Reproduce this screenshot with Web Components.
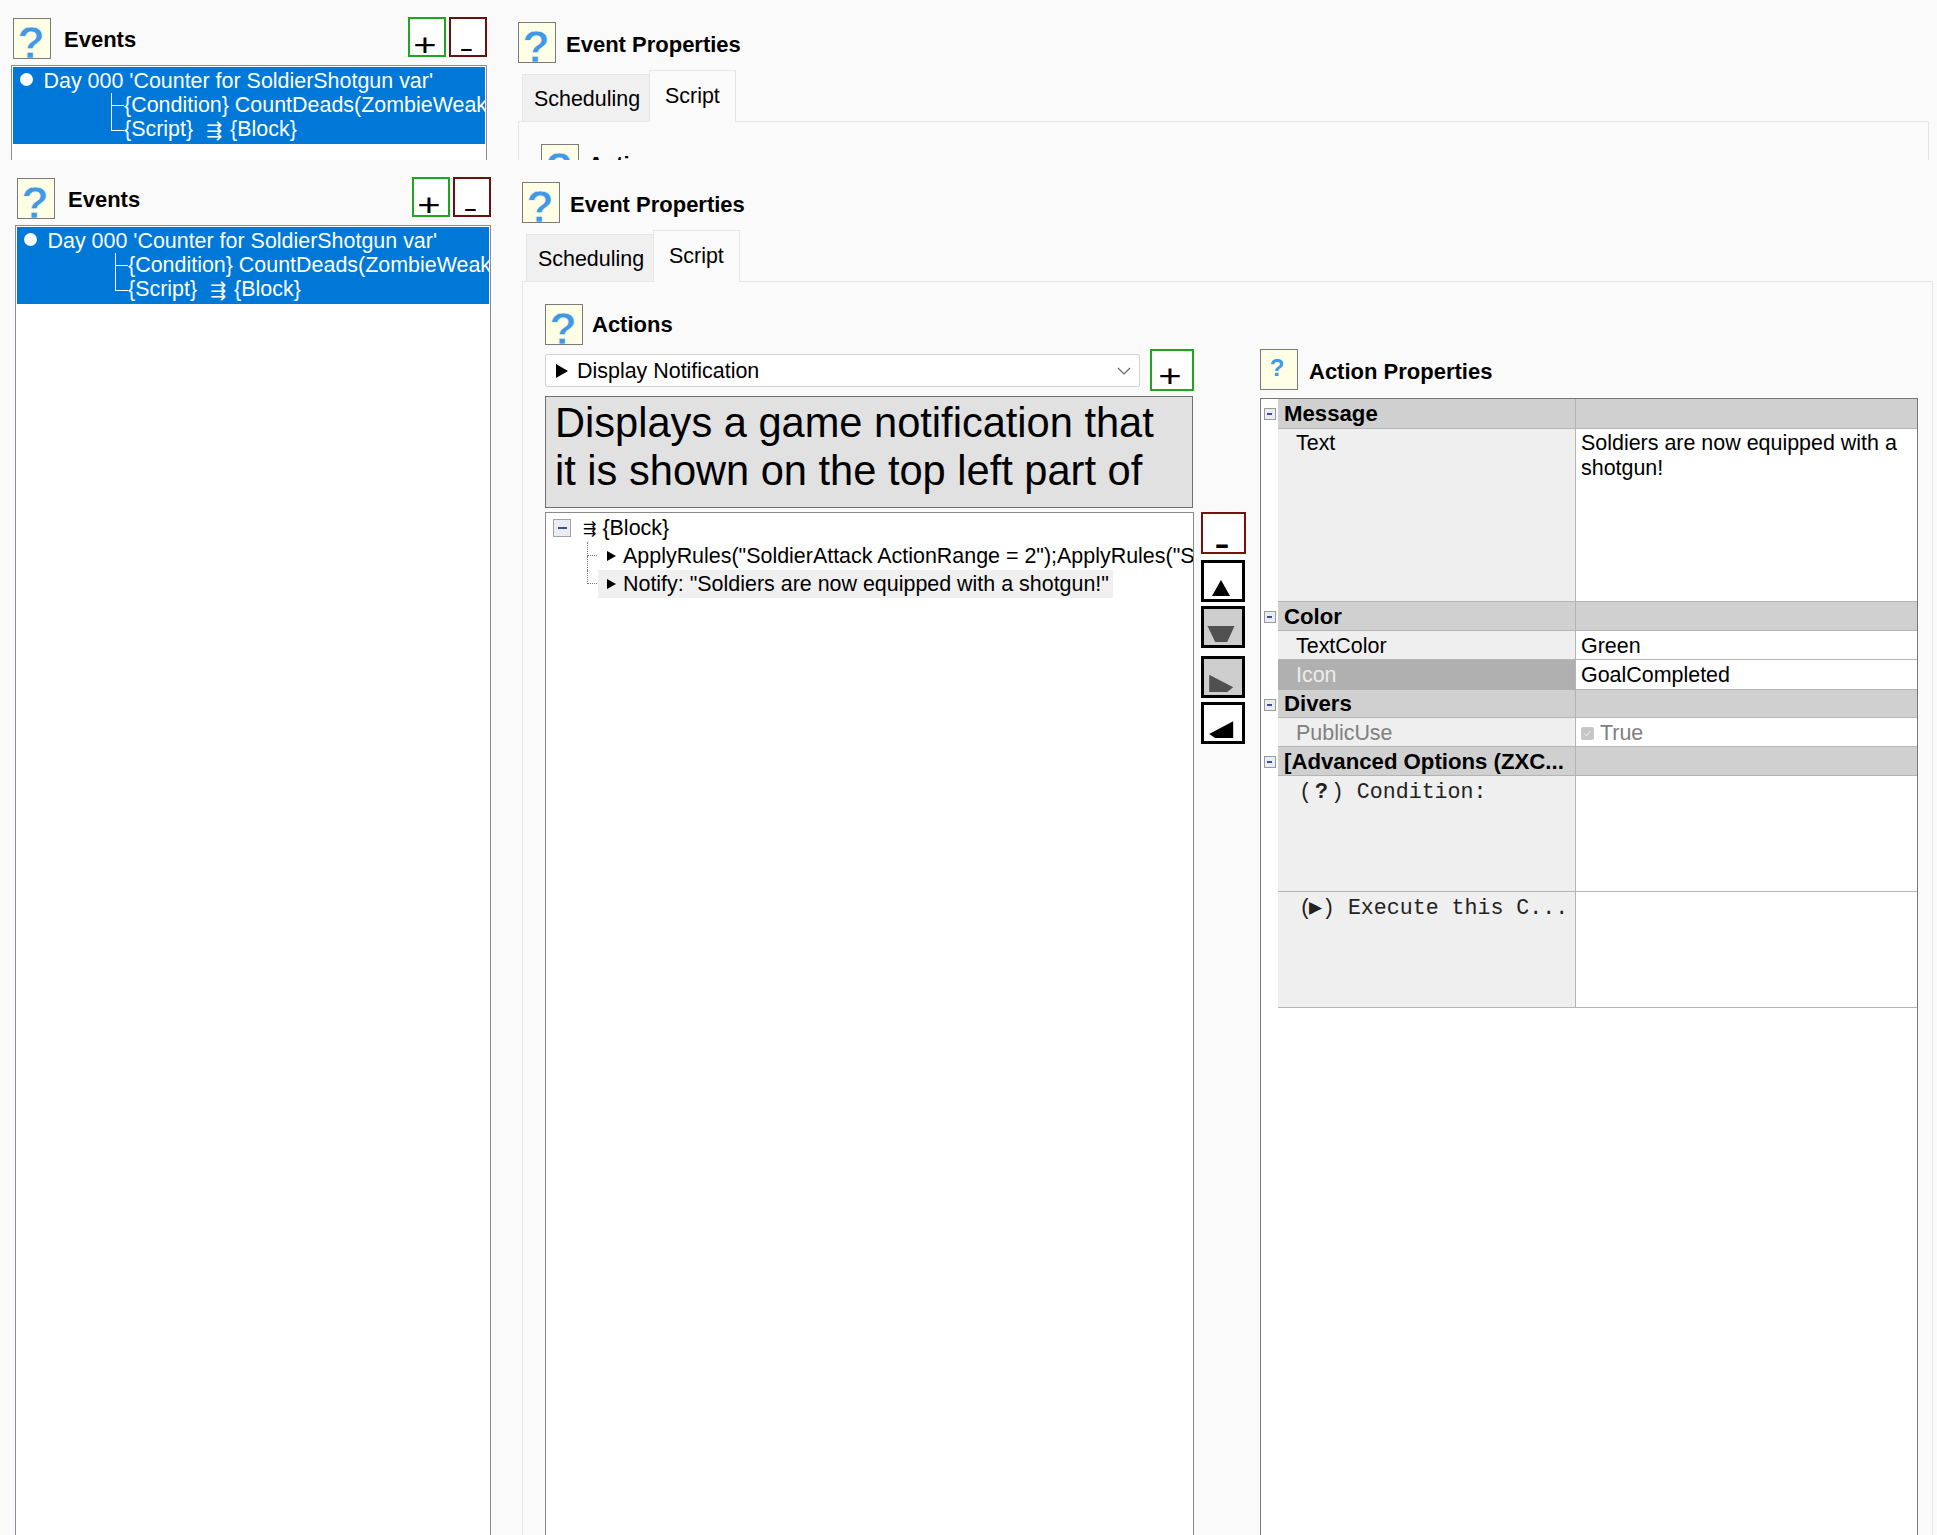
<!DOCTYPE html>
<html>
<head>
<meta charset="utf-8">
<title>Events</title>
<style>
  html, body { margin: 0; height: 100%; overflow: hidden; background: #fafafa; }
  body { font: 21.45px "Liberation Sans", Arial, sans-serif; color: #000; }
  prop-row .q { margin: 0 3px; }
  prop-row .r { font-style: normal; margin-left: -3px; }
</style>
</head>
<body>

<app-screen shift="0" style="height:160px">
  <events-pane>
    <event-list></event-list>
  </events-pane>
  <properties-pane>
    <section-title>Actions</section-title>
  </properties-pane>
</app-screen>

<app-screen shift="4" style="height:1375px">
  <events-pane>
    <event-list></event-list>
  </events-pane>
  <properties-pane>
    <div style="display:flex;gap:14px;height:100%">
      <action-editor>
        <tree-row kind="block"></tree-row>
        <tree-row text='ApplyRules("SoldierAttack ActionRange = 2");ApplyRules("S'></tree-row>
        <tree-row last active text='Notify: "Soldiers are now equipped with a shotgun!"'></tree-row>
      </action-editor>
      <action-props>
        <prop-row header name="Message" h="30"></prop-row>
        <prop-row tall name="Text" h="173" value="Soldiers are now equipped with a shotgun!"></prop-row>
        <prop-row header name="Color" h="29"></prop-row>
        <prop-row name="TextColor" h="29" value="Green"></prop-row>
        <prop-row selected name="Icon" h="30" value="GoalCompleted"></prop-row>
        <prop-row header name="Divers" h="28" style="--pad:1px"></prop-row>
        <prop-row readonly name="PublicUse" h="29" value="True"></prop-row>
        <prop-row header name="[Advanced Options (ZXC..." h="29"></prop-row>
        <prop-row code h="116"><span>(<b class="q">?</b>) Condition:</span></prop-row>
        <prop-row code h="116"><span>(<i class="r">&#9654;</i>) Execute this C...</span></prop-row>
      </action-props>
    </div>
  </properties-pane>
</app-screen>

<script>
const FONT = '"Liberation Sans", Arial, sans-serif';

class HelpIcon extends HTMLElement {
    constructor() {
        super();
        this.attachShadow({ mode: 'open' });
        const small = this.hasAttribute('small');
        this.shadowRoot.innerHTML = `
            <style>
                :host {
                    display: block;
                    flex: none;
                    box-sizing: border-box;
                    width: 38px;
                    height: 41px;
                    border: 1px solid #7a7a7a;
                    background: #ffffe6;
                    overflow: hidden;
                    text-align: center;
                    color: #3f98e8;
                    font-family: ${FONT};
                }
                span { display: block; }
                .big { font-size: 45px; line-height: 50px; margin-top: -1px; margin-left: -2px; -webkit-text-stroke: 0.7px #ffffe6; }
                .small { font-size: 24px; font-weight: bold; line-height: 28px; margin-top: 4px; margin-left: -4px; }
            </style>
            <span class="${small ? 'small' : 'big'}">?</span>
        `;
    }
}

class SectionTitle extends HTMLElement {
    constructor() {
        super();
        this.attachShadow({ mode: 'open' });
        const small = this.hasAttribute('small');
        this.shadowRoot.innerHTML = `
            <style>
                :host {
                    display: flex;
                    align-items: center;
                    gap: ${this.getAttribute('gap') || 9}px;
                    font-size: 22px;
                    font-weight: bold;
                }
                span { padding-top: ${this.getAttribute('dy') || 0}px; }
            </style>
            <help-icon ${small ? 'small' : ''}></help-icon>
            <span><slot></slot></span>
        `;
    }
}

class SquareButton extends HTMLElement {
    constructor() {
        super();
        this.attachShadow({ mode: 'open' });
        this.shadowRoot.innerHTML = `
            <style>
                :host {
                    display: flex;
                    flex: none;
                    justify-content: center;
                    align-items: flex-end;
                    box-sizing: border-box;
                    width: 38px;
                    height: 40px;
                    border: 2px solid #1ca81c;
                    background: #fff;
                    font-family: ${FONT};
                }
                :host([tone=add]) span { font-size: 32px; line-height: 20px; transform: translateX(-2.3px) scaleX(1.25); }
                :host([tone=del]) { border-color: #6b0f0f; }
                :host([tone=del]) span { font-size: 26px; line-height: 14px; transform: translateX(-2px) scaleX(1.65); }
                :host([tone=del][heavy]) span { font-size: 30px; font-weight: bold; line-height: 16px; transform: translateX(-2px) scaleX(1.5); }
                :host([tone=arrow]) { border: 3px solid #000; width: 44px; height: 42px; }
                :host([off]) { background: #cdcdcd; }
                ::slotted(svg) { display: block; margin-right: 5px; }
            </style>
            <span><slot></slot></span>
        `;
    }
}

class EventsPane extends HTMLElement {
    constructor() {
        super();
        this.attachShadow({ mode: 'open' });
        this.shadowRoot.innerHTML = `
            <style>
                :host {
                    display: flex;
                    flex-direction: column;
                    flex: none;
                    box-sizing: border-box;
                    width: 476px;
                    height: 100%;
                    padding-top: 17px;
                }
                .head { display: flex; align-items: flex-start; height: 40px; margin-bottom: 8px; gap: 3px; }
                section-title { flex: 1; margin: 1px 0 0 2px; }
                .box {
                    flex: 1;
                    border: 1px solid #8b8b96;
                    border-bottom: none;
                    background: #fff;
                    padding: 1px 1px 0;
                    overflow: hidden;
                }
            </style>
            <div class="head">
                <section-title gap="13" dy="2">Events</section-title>
                <square-button tone="add">+</square-button>
                <square-button tone="del">-</square-button>
            </div>
            <div class="box"><slot></slot></div>
        `;
    }
}

class EventList extends HTMLElement {
    constructor() {
        super();
        this.attachShadow({ mode: 'open' });
        this.shadowRoot.innerHTML = `
            <style>
                :host {
                    display: block;
                    background: #0078d7;
                    color: #fff;
                    padding: 2px 0;
                    white-space: nowrap;
                    overflow: hidden;
                }
                .row { display: flex; align-items: center; height: 24.33px; }
                .dot { width: 13px; height: 13px; border-radius: 50%; background: #fff; margin: -3px 10.5px 0 7px; }
                .twig { position: relative; align-self: stretch; width: 13px; margin-left: 98px; flex: none; }
                .twig::before { content: ""; position: absolute; left: 0; top: 0; bottom: 0; border-left: 1px solid #fff; }
                .twig::after { content: ""; position: absolute; left: 0; right: 0; top: 50%; border-top: 1px solid #fff; }
                .twig.end::before { bottom: 50%; }
                .glyph { font-family: "DejaVu Sans", sans-serif; font-size: 19px; margin: 0 8px 0 13px; }
            </style>
            <div class="row"><span class="dot"></span>Day 000 'Counter for SoldierShotgun var'</div>
            <div class="row"><span class="twig"></span>{Condition} CountDeads(ZombieWeak</div>
            <div class="row"><span class="twig end"></span>{Script}<span class="glyph">&#8694;</span>{Block}</div>
        `;
    }
}

class TabStrip extends HTMLElement {
    constructor() {
        super();
        this.attachShadow({ mode: 'open' });
        this.shadowRoot.innerHTML = `
            <style>
                :host {
                    display: flex;
                    align-items: flex-end;
                    height: 51px;
                    margin: 8px 0 0 4px;
                    position: relative;
                    z-index: 1;
                    margin-bottom: -1px;
                }
                div { box-sizing: border-box; border: 1px solid #e6e6e6; }
                .off { height: 48px; width: 127px; padding: 12px 0 0 11px; background: #f0f0f0; border-right: none; border-bottom-color: #e6e6e6; }
                .on { height: 52px; width: 87px; padding: 13px 0 0 15px; background: #fafafa; border-bottom: none; }
            </style>
            <div class="off">Scheduling</div>
            <div class="on">Script</div>
        `;
    }
}

class PropertiesPane extends HTMLElement {
    constructor() {
        super();
        this.attachShadow({ mode: 'open' });
        this.shadowRoot.innerHTML = `
            <style>
                :host {
                    display: flex;
                    flex-direction: column;
                    flex: 1;
                    min-width: 0;
                    box-sizing: border-box;
                    height: 100%;
                    margin: 0 4px 0 31px;
                    padding-top: 22px;
                }
                .panel {
                    flex: 1;
                    min-height: 0;
                    border: 1px solid #e6e6e6;
                    border-bottom: none;
                    padding: 22px 14px 0 22px;
                    overflow: hidden;
                }
            </style>
            <section-title gap="10" dy="5">Event Properties</section-title>
            <tab-strip></tab-strip>
            <div class="panel"><slot></slot></div>
        `;
    }
}

class ActionEditor extends HTMLElement {
    constructor() {
        super();
        this.attachShadow({ mode: 'open' });
        this.shadowRoot.innerHTML = `
            <style>
                :host { display: flex; flex-direction: column; flex: none; width: 701px; height: 100%; }
                .pick { display: flex; gap: 10px; height: 42px; margin: 4px 0 5px; width: 649px; }
                .combo {
                    display: flex;
                    align-items: center;
                    flex: 1;
                    box-sizing: border-box;
                    height: 33px;
                    margin-top: 5px;
                    padding: 0 8px 0 10px;
                    background: #fff;
                    border: 1px solid #d2d2d2;
                    border-radius: 2px;
                }
                .combo span { flex: 1; margin-left: 9px; padding-top: 2px; }
                .pick square-button { width: 44px; height: 42px; padding-bottom: 3px; }
                .info {
                    box-sizing: border-box;
                    width: 648px;
                    height: 112px;
                    padding: 2px 9px 0;
                    background: #e1e1e1;
                    border: 1px solid #6f6f6f;
                    font-size: 41.6px;
                    line-height: 48px;
                    overflow: hidden;
                    white-space: nowrap;
                    margin-bottom: 4px;
                }
                .work { flex: 1; display: flex; gap: 7px; min-height: 0; }
                .tree {
                    width: 649px;
                    box-sizing: border-box;
                    flex: none;
                    background: #fff;
                    border: 1px solid #8a8a8a;
                    border-bottom: none;
                    padding-top: 1px;
                    overflow: hidden;
                    white-space: nowrap;
                }
                .tools { display: flex; flex-direction: column; }
                .tools square-button { margin-bottom: 4px; }
                .tools square-button[tone=del] { width: 45px; height: 42px; margin-bottom: 6px; border-color: #7a0f0f; }
                .tools square-button.gap { margin-bottom: 8px; }
            </style>
            <section-title gap="9">Actions</section-title>
            <div class="pick">
                <div class="combo">
                    <svg width="12" height="14" viewBox="0 0 12 14"><path d="M0 0 12 7 0 14z"/></svg>
                    <span>Display Notification</span>
                    <svg width="14" height="8" viewBox="0 0 14 8"><path d="M1 1 7 7 13 1" fill="none" stroke="#666" stroke-width="1.2"/></svg>
                </div>
                <square-button tone="add">+</square-button>
            </div>
            <div class="info">Displays a game notification that<br>it is shown on the top left part of</div>
            <div class="work">
                <div class="tree"><slot></slot></div>
                <div class="tools">
                    <square-button tone="del" heavy>-</square-button>
                    <square-button tone="arrow"><svg width="20" height="20" viewBox="0 0 20 20"><path d="M10 1 19 17 1 17z"/></svg></square-button>
                    <square-button tone="arrow" off class="gap"><svg width="30" height="20" viewBox="0 0 30 20"><path d="M1.5 1 28.5 1 21.2 17 9.2 17z" fill="#505050"/></svg></square-button>
                    <square-button tone="arrow" off><svg width="26" height="21" viewBox="0 0 26 21"><path d="M1.2 .7 25.2 13.3 19.2 18 1.2 18z" fill="#505050"/></svg></square-button>
                    <square-button tone="arrow"><svg width="26" height="21" viewBox="0 0 26 21"><path d="M25.2 1.3 1.2 14 7.2 18 25.2 18z"/></svg></square-button>
                </div>
            </div>
        `;
    }
}

class TreeRow extends HTMLElement {
    constructor() {
        super();
        this.attachShadow({ mode: 'open' });
        const isBlock = this.getAttribute('kind') === 'block';
        const text = this.getAttribute('text') || '';
        this.shadowRoot.innerHTML = `
            <style>
                :host { display: flex; align-items: center; height: 28px; }
                .box {
                    display: flex; justify-content: center; align-items: center;
                    box-sizing: border-box;
                    width: 18px; height: 18px;
                    margin: 0 12px 0 7px;
                    background: #e9ecf3;
                    border: 1px solid #a2a2a2;
                }
                .box i { width: 9px; height: 2px; background: #36508f; }
                .stack { font-family: "DejaVu Sans", sans-serif; font-size: 16px; margin-right: 6px; }
                .twig {
                    position: relative;
                    align-self: flex-start;
                    flex: none;
                    box-sizing: border-box;
                    width: 10px; height: 14px;
                    margin-left: 41px;
                    border-left: 1px dotted #777;
                    border-bottom: 1px dotted #777;
                }
                :host(:not([last])) .twig::after {
                    content: ""; position: absolute; left: -1px; top: 14px; height: 14px;
                    border-left: 1px dotted #777;
                }
                .label { display: flex; align-items: center; gap: 7px; height: 28px; padding: 0 4px 0 9px; margin-left: 1px; }
                :host([active]) .label { background: #f0f0f0; }
            </style>
            ${isBlock
                ? `<span class="box"><i></i></span><span class="stack">&#8694;</span><span>{Block}</span>`
                : `<span class="twig"></span><span class="label"><svg width="9" height="10" viewBox="0 0 9 10"><path d="M0 0 9 5 0 10z"/></svg><span>${text.replace(/"/g, '&quot;')}</span></span>`}
        `;
    }
}

class ActionProps extends HTMLElement {
    constructor() {
        super();
        this.attachShadow({ mode: 'open' });
        this.shadowRoot.innerHTML = `
            <style>
                :host { display: flex; flex-direction: column; flex: 1; min-width: 0; height: 100%; padding-top: 45px; box-sizing: border-box; }
                section-title { margin-bottom: 8px; }
                .grid {
                    flex: 1;
                    background: #fff;
                    border: 1px solid #777;
                    border-bottom: none;
                    overflow: hidden;
                }
            </style>
            <section-title small gap="11" dy="5">Action Properties</section-title>
            <div class="grid"><slot></slot></div>
        `;
    }
}

class PropRow extends HTMLElement {
    constructor() {
        super();
        this.attachShadow({ mode: 'open' });
        const name = this.getAttribute('name') || '';
        const value = this.getAttribute('value') || '';
        this.style.height = this.getAttribute('h') + 'px';
        const check = this.hasAttribute('readonly')
            ? `<svg width="13" height="13" viewBox="0 0 13 13"><rect width="13" height="13" rx="2" fill="#c6c6c6"/><path d="M3.5 6.5 5.6 9 9.5 4" fill="none" stroke="#f2f2f2" stroke-width="1"/></svg>`
            : '';
        this.shadowRoot.innerHTML = `
            <style>
                :host { display: grid; grid-template-columns: 17px 298px 1fr; box-sizing: border-box; }
                .name, .value { box-sizing: border-box; border-bottom: 1px solid #b4b4b4; min-width: 0; line-height: 25px; }
                .name { background: #efefef; border-right: 1px solid #b4b4b4; padding: 3px 0 0 18px; white-space: nowrap; overflow: hidden; }
                .value { padding: 3px 8px 0 5px; }
                :host([tall]) .name, :host([tall]) .value { padding-top: 2px; }
                .toggle { display: flex; justify-content: center; padding-top: 9px; box-sizing: border-box; }
                .toggle i {
                    display: flex; justify-content: center; align-items: center;
                    box-sizing: border-box; width: 12px; height: 12px;
                    background: #e9ecf3; border: 1px solid #9a9a9a;
                }
                .toggle i::after { content: ""; width: 5px; height: 2px; background: #3a4fa0; }
                :host([header]) .name, :host([header]) .value { background: #d0d0d0; font-weight: bold; font-size: 22.2px; padding-top: var(--pad, 2px); }
                :host([header]) .name { padding-left: 6px; }
                :host([selected]) .name { background: #b0b0b0; color: #ececec; border-bottom: none; }
                :host([readonly]) .name, :host([readonly]) .value { color: #808080; }
                :host([readonly]) .value { display: flex; align-items: center; gap: 6px; padding-top: 2px; }
                :host([code]) .name { font-family: "Liberation Mono", "Courier New", monospace; font-size: 21.6px; padding-left: 21px; padding-top: 4px; color: #222; }
                ::slotted(span) { white-space: pre; }
            </style>
            <div class="toggle">${this.hasAttribute('header') ? '<i></i>' : ''}</div>
            <div class="name">${name}<slot></slot></div>
            <div class="value">${check}${check ? `<span>${value}</span>` : value}</div>
        `;
    }
}

class AppScreen extends HTMLElement {
    constructor() {
        super();
        this.attachShadow({ mode: 'open' });
        const shift = Number(this.getAttribute('shift'));
        this.shadowRoot.innerHTML = `
            <style>
                :host {
                    display: flex;
                    box-sizing: border-box;
                    padding-left: ${11 + shift}px;
                    padding-right: ${4 - shift}px;
                    overflow: hidden;
                }
            </style>
            <slot></slot>
        `;
    }
}

customElements.define('help-icon', HelpIcon);
customElements.define('section-title', SectionTitle);
customElements.define('square-button', SquareButton);
customElements.define('event-list', EventList);
customElements.define('events-pane', EventsPane);
customElements.define('tab-strip', TabStrip);
customElements.define('properties-pane', PropertiesPane);
customElements.define('tree-row', TreeRow);
customElements.define('action-editor', ActionEditor);
customElements.define('prop-row', PropRow);
customElements.define('action-props', ActionProps);
customElements.define('app-screen', AppScreen);
</script>
</body>
</html>
